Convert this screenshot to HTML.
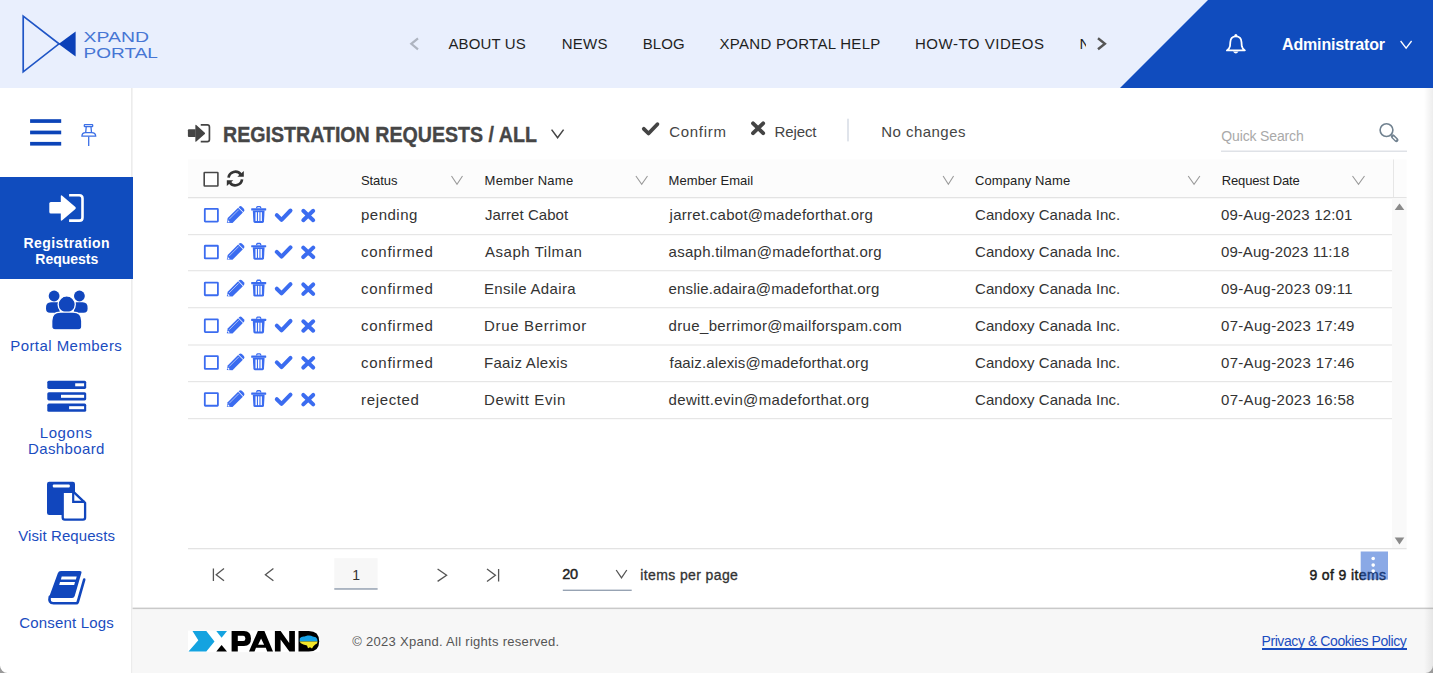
<!DOCTYPE html>
<html><head><meta charset="utf-8"><title>Registration Requests</title>
<style>
html,body{margin:0;padding:0;}
body{width:1433px;height:673px;position:relative;overflow:hidden;background:#fff;font-family:"Liberation Sans",sans-serif;}
.hdr{position:absolute;left:0;top:0;width:1433px;height:88px;background:#e9effd;}
svg.ov{position:absolute;left:0;top:0;}
.t{position:absolute;white-space:nowrap;font-family:"Liberation Sans",sans-serif;}
</style></head><body>
<div class="hdr"></div>
<svg class="ov" width="1433" height="673" viewBox="0 0 1433 673">
<polygon points="1208,0 1433,0 1433,88 1120,88" fill="#104cbe"/>
<path d="M23.2,16.2 L59,43.8 L23.2,71.8 Z" fill="none" stroke="#1f55c6" stroke-width="1.7" stroke-linejoin="miter"/>
<polygon points="58.6,43.9 75.6,31.4 75.6,56.6" fill="#0b40b8"/>
<text x="83.6" y="41.9" font-family="Liberation Sans" font-size="14.6" fill="#4676d4" textLength="65.4" lengthAdjust="spacingAndGlyphs">XPAND</text>
<text x="83.6" y="58.1" font-family="Liberation Sans" font-size="14.6" fill="#4676d4" textLength="74.3" lengthAdjust="spacingAndGlyphs">PORTAL</text>
<polyline points="418,38.3 411.3,43.8 418,49.3" fill="none" stroke="#aeb4c0" stroke-width="2.2"/>
<polyline points="1098,38.3 1104.9,43.8 1098,49.3" fill="none" stroke="#555" stroke-width="2.4"/>
<g fill="none" stroke="#fff" stroke-width="1.8" stroke-linejoin="round"><path d="M1235.9,36.4 Q1241.3,36.4 1241.5,42.2 L1241.8,46.2 Q1242.3,48.8 1244.9,50.4 L1226.9,50.4 Q1229.5,48.8 1230,46.2 L1230.3,42.2 Q1230.5,36.4 1235.9,36.4 Z"/></g>
<circle cx="1235.9" cy="35.4" r="1.5" fill="#fff"/><path d="M1233,51.6 Q1235.8,55.5 1238.6,51.6 Z" fill="#fff"/>
<polyline points="1400.6,41 1406.1,48.1 1411.6,41" fill="none" stroke="#fff" stroke-width="1.3"/>
<rect x="131" y="88" width="1.6" height="585" fill="#ececec"/>
<rect x="30.1" y="119.2" width="31.1" height="3.7" fill="#0c44b8"/>
<rect x="30.1" y="130.6" width="31.1" height="3.7" fill="#0c44b8"/>
<rect x="30.1" y="141.9" width="31.1" height="3.7" fill="#0c44b8"/>
<g fill="none" stroke="#3b6fe6" stroke-width="1.3"><rect x="84.3" y="124.6" width="8.4" height="2" rx="0.6"/><path d="M86.2,127 L85.7,132.6 M91,127 L91.5,132.6"/><path d="M81.9,136.2 L95.7,136.2 Q95.7,132.6 91.5,132.6 L85.7,132.6 Q81.9,132.6 81.9,136.2 Z"/><path d="M88.7,136.5 L88.7,146"/></g>
<rect x="0" y="177" width="133" height="102" fill="#104cbe"/>
<g transform="translate(49,193.6) scale(1.0,1.0)">
<path fill="#fff" d="M1.8,8.3 L12.2,8.3 L12.2,19.8 L1.8,19.8 Q0.3,19.8 0.3,18.3 L0.3,9.8 Q0.3,8.3 1.8,8.3 Z"/>
<path fill="#fff" d="M11.8,2.6 Q11.8,0.9 13.2,2.1 L26.4,13.4 Q27.3,14.4 26.4,15.4 L13.2,26.7 Q11.8,27.9 11.8,26.2 Z"/>
<path fill="none" stroke="#fff" stroke-width="2.6" d="M20.1,1.7 L30.3,1.7 Q33.5,1.7 33.5,4.9 L33.5,23.8 Q33.5,27 30.3,27 L20.1,27"/>
</g>
<g fill="#1146bd">
<circle cx="54.1" cy="296" r="5.4"/><circle cx="79.4" cy="296" r="5.4"/>
<path d="M46,308.5 Q45.6,302.2 51,302.2 L58,302.2 L60,312.8 L50,312.8 Q46,312.8 46,308.5 Z"/>
<path d="M87.6,308.5 Q88,302.2 82.6,302.2 L75.6,302.2 L73.6,312.8 L83.6,312.8 Q87.6,312.8 87.6,308.5 Z"/>
</g><g fill="#1146bd" stroke="#fff" stroke-width="1.3">
<circle cx="66.7" cy="304.5" r="8.6"/>
<path d="M51.7,321 Q51.7,312.1 60.5,312.1 L73,312.1 Q81.8,312.1 81.8,321 L81.8,326.4 Q81.8,329.8 78.4,329.8 L55.1,329.8 Q51.7,329.8 51.7,326.4 Z"/>
</g>
<rect x="47.3" y="380.7" width="38.9" height="8.2" rx="1.6" fill="#1146bd"/>
<rect x="75.2" y="383.3" width="8.899999999999991" height="3" fill="#fff"/>
<rect x="47.3" y="392.2" width="38.9" height="8.2" rx="1.6" fill="#1146bd"/>
<rect x="61" y="394.8" width="23.099999999999994" height="3" fill="#fff"/>
<rect x="47.3" y="403.6" width="38.9" height="8.2" rx="1.6" fill="#1146bd"/>
<rect x="69.1" y="406.20000000000005" width="15.0" height="3" fill="#fff"/>
<rect x="47" y="481.8" width="28" height="33.2" rx="2.2" fill="#1146bd"/>
<rect x="52.8" y="484.4" width="17" height="3" rx="1" fill="#fff"/>
<path d="M62.7,491.8 L73.5,491.8 L85.1,502.8 L85.1,517.6 Q85.1,519.7 83,519.7 L64.8,519.7 Q62.7,519.7 62.7,517.6 Z" fill="#fff" stroke="#1146bd" stroke-width="2.3" stroke-linejoin="round"/>
<path d="M73.2,492 L73.2,501.8 L84.8,501.8" fill="none" stroke="#1146bd" stroke-width="2.2"/>
<path d="M61,570.9 L79.8,570.9 Q82,570.9 81.4,573.1 L74.7,596 Q74.1,598 72.1,598 L50.6,598 Q48.9,598 49.4,596.3 L57.8,573.3 Q58.6,570.9 61,570.9 Z" fill="#1146bd"/>
<path d="M49.8,596.8 Q48.2,603.3 53.6,603.3 L76.2,603.3 Q77.4,603.3 77.8,602 L84.2,579.6" fill="none" stroke="#1146bd" stroke-width="2.6" stroke-linecap="round" stroke-linejoin="round"/>
<path d="M61.7,576.5 L76.7,576.5 L75.9,579.4 L60.9,579.4 Z M60,582 L75,582 L74.2,585 L59.2,585 Z" fill="#fff"/>
<g transform="translate(187.7,123.7) scale(0.6485714285714286,0.6678571428571428)">
<path fill="#444" d="M1.8,8.3 L12.2,8.3 L12.2,19.8 L1.8,19.8 Q0.3,19.8 0.3,18.3 L0.3,9.8 Q0.3,8.3 1.8,8.3 Z"/>
<path fill="#444" d="M11.8,2.6 Q11.8,0.9 13.2,2.1 L26.4,13.4 Q27.3,14.4 26.4,15.4 L13.2,26.7 Q11.8,27.9 11.8,26.2 Z"/>
<path fill="none" stroke="#444" stroke-width="2.6" d="M20.1,1.7 L30.3,1.7 Q33.5,1.7 33.5,4.9 L33.5,23.8 Q33.5,27 30.3,27 L20.1,27"/>
</g>
<polyline points="551.6,129.6 557.6,137.8 563.6,129.6" fill="none" stroke="#444" stroke-width="1.5"/>
<polyline points="643.80,128.79 648.51,133.50 657.40,124.20" fill="none" stroke="#444" stroke-width="3.8" stroke-linecap="round" stroke-linejoin="round"/>
<path d="M753.0500000000001,123.35000000000001 L763.15,133.15 M763.15,123.35000000000001 L753.0500000000001,133.15" stroke="#444" stroke-width="3.9" stroke-linecap="round"/>
<rect x="847.2" y="118.7" width="1.6" height="22.7" fill="#d9dee7"/>
<g fill="none" stroke="#718290" stroke-linecap="round"><circle cx="1386.5" cy="130.1" r="6.4" stroke-width="1.6"/><path d="M1392.9,136.6 L1396.4,140.1" stroke-width="4.2"/><path d="M1393.5,137.2 L1395.8,139.5" stroke="#fff" stroke-width="1.3"/></g>
<rect x="1221" y="150.5" width="186" height="1.5" fill="#dfe2e7"/>
<rect x="188" y="159.5" width="1218.6" height="37.5" fill="#fcfcfc"/>
<rect x="1393" y="159.5" width="1" height="37.5" fill="#e6e6e6"/>
<rect x="188" y="197" width="1218.6" height="1.3" fill="#e3e3e3"/>
<polyline points="451.5,176 457.0,184.3 462.5,176" fill="none" stroke="#9a9a9a" stroke-width="1.1"/>
<polyline points="635.9,176 641.7,184.3 647.5,176" fill="none" stroke="#9a9a9a" stroke-width="1.1"/>
<polyline points="943.1,176 948.35,184.3 953.6,176" fill="none" stroke="#9a9a9a" stroke-width="1.1"/>
<polyline points="1188.2,176 1194.0500000000002,184.3 1199.9,176" fill="none" stroke="#9a9a9a" stroke-width="1.1"/>
<polyline points="1352.5,176 1358.5,184.3 1364.5,176" fill="none" stroke="#9a9a9a" stroke-width="1.1"/>
<rect x="204.20000000000002" y="172.5" width="13.699999999999983" height="13.500000000000023" fill="#fff" stroke="#474747" stroke-width="1.6" rx="0.5"/>
<g transform="translate(235.3,178.5)"><path d="M-6.75,-0.9 A6.8,6.8 0 0 1 5.4,-4.1" fill="none" stroke="#333" stroke-width="2.7"/><polygon points="8.5,-7.6 8.5,-1.8 2,-1.8" fill="#333"/><path d="M6.75,0.9 A6.8,6.8 0 0 1 -5.4,4.1" fill="none" stroke="#333" stroke-width="2.7"/><polygon points="-8.5,7.6 -8.5,1.8 -2,1.8" fill="#333"/></g>
<rect x="1392" y="198.3" width="14.6" height="349.7" fill="#f9f9f9"/>
<polygon points="1394.7,210 1399.5,203.4 1404.3,210" fill="#8a8a8a"/>
<polygon points="1394.7,537.6 1404.3,537.6 1399.5,544.4" fill="#8a8a8a"/>
<rect x="188" y="234" width="1204" height="1.2" fill="#e6e6e6"/>
<rect x="188" y="270.1" width="1204" height="1.2" fill="#e6e6e6"/>
<rect x="188" y="307.1" width="1204" height="1.2" fill="#e6e6e6"/>
<rect x="188" y="344.4" width="1204" height="1.2" fill="#e6e6e6"/>
<rect x="188" y="381" width="1204" height="1.2" fill="#e6e6e6"/>
<rect x="188" y="418" width="1204" height="1.2" fill="#e6e6e6"/>
<rect x="204.8" y="208.9" width="13.100000000000005" height="12.7" fill="#fff" stroke="#3b6cf0" stroke-width="1.8" rx="0.5"/>
<g transform="translate(226.5,206.9)" fill="#3b6cf0">
<path d="M0.3,15.8 L1.2,11.2 L11.6,0.8 L16.4,5.6 L6,16 Z"/>
<path d="M12.6,-0.2 Q14,-1.4 15.4,-0.2 L17.4,1.8 Q18.6,3.2 17.4,4.6 L16.9,5.1 L12.1,0.3 Z"/>
<path d="M2.6,12.4 L12.2,2.8" stroke="#fff" stroke-width="0.7" opacity="0.8"/>
<path d="M1.6,13.4 L3.1,14.9 L2.3,15.7 L0.8,14.2 Z" fill="#fff"/>
</g>
<g transform="translate(251.2,205.9)" fill="#3b6cf0">
<path d="M4.6,2.4 L5.3,0.6 Q5.6,0 6.3,0 L8.7,0 Q9.4,0 9.7,0.6 L10.4,2.4 L9,2.4 L8.6,1.4 L6.4,1.4 L6,2.4 Z"/>
<rect x="0" y="2.4" width="15" height="2.2" rx="0.5"/>
<path d="M1.6,4.6 L13.4,4.6 L12.8,15.6 Q12.7,17 11.3,17 L3.7,17 Q2.3,17 2.2,15.6 Z"/>
<rect x="4.3" y="6.3" width="1.4" height="8.8" fill="#fff"/>
<rect x="6.8" y="6.3" width="1.4" height="8.8" fill="#fff"/>
<rect x="9.3" y="6.3" width="1.4" height="8.8" fill="#fff"/>
</g>
<polyline points="276.80,215.07 281.53,219.80 290.50,210.50" fill="none" stroke="#3b6cf0" stroke-width="4.0" stroke-linecap="round" stroke-linejoin="round"/>
<path d="M303.3,210.8 L313.2,220.2 M313.2,210.8 L303.3,220.2" stroke="#3b6cf0" stroke-width="4.0" stroke-linecap="round"/>
<rect x="204.8" y="245.73" width="13.100000000000005" height="12.7" fill="#fff" stroke="#3b6cf0" stroke-width="1.8" rx="0.5"/>
<g transform="translate(226.5,243.73000000000002)" fill="#3b6cf0">
<path d="M0.3,15.8 L1.2,11.2 L11.6,0.8 L16.4,5.6 L6,16 Z"/>
<path d="M12.6,-0.2 Q14,-1.4 15.4,-0.2 L17.4,1.8 Q18.6,3.2 17.4,4.6 L16.9,5.1 L12.1,0.3 Z"/>
<path d="M2.6,12.4 L12.2,2.8" stroke="#fff" stroke-width="0.7" opacity="0.8"/>
<path d="M1.6,13.4 L3.1,14.9 L2.3,15.7 L0.8,14.2 Z" fill="#fff"/>
</g>
<g transform="translate(251.2,242.73000000000002)" fill="#3b6cf0">
<path d="M4.6,2.4 L5.3,0.6 Q5.6,0 6.3,0 L8.7,0 Q9.4,0 9.7,0.6 L10.4,2.4 L9,2.4 L8.6,1.4 L6.4,1.4 L6,2.4 Z"/>
<rect x="0" y="2.4" width="15" height="2.2" rx="0.5"/>
<path d="M1.6,4.6 L13.4,4.6 L12.8,15.6 Q12.7,17 11.3,17 L3.7,17 Q2.3,17 2.2,15.6 Z"/>
<rect x="4.3" y="6.3" width="1.4" height="8.8" fill="#fff"/>
<rect x="6.8" y="6.3" width="1.4" height="8.8" fill="#fff"/>
<rect x="9.3" y="6.3" width="1.4" height="8.8" fill="#fff"/>
</g>
<polyline points="276.80,251.90 281.53,256.63 290.50,247.33" fill="none" stroke="#3b6cf0" stroke-width="4.0" stroke-linecap="round" stroke-linejoin="round"/>
<path d="M303.3,247.63 L313.2,257.03 M313.2,247.63 L303.3,257.03" stroke="#3b6cf0" stroke-width="4.0" stroke-linecap="round"/>
<rect x="204.8" y="282.55999999999995" width="13.100000000000005" height="12.7" fill="#fff" stroke="#3b6cf0" stroke-width="1.8" rx="0.5"/>
<g transform="translate(226.5,280.56)" fill="#3b6cf0">
<path d="M0.3,15.8 L1.2,11.2 L11.6,0.8 L16.4,5.6 L6,16 Z"/>
<path d="M12.6,-0.2 Q14,-1.4 15.4,-0.2 L17.4,1.8 Q18.6,3.2 17.4,4.6 L16.9,5.1 L12.1,0.3 Z"/>
<path d="M2.6,12.4 L12.2,2.8" stroke="#fff" stroke-width="0.7" opacity="0.8"/>
<path d="M1.6,13.4 L3.1,14.9 L2.3,15.7 L0.8,14.2 Z" fill="#fff"/>
</g>
<g transform="translate(251.2,279.56)" fill="#3b6cf0">
<path d="M4.6,2.4 L5.3,0.6 Q5.6,0 6.3,0 L8.7,0 Q9.4,0 9.7,0.6 L10.4,2.4 L9,2.4 L8.6,1.4 L6.4,1.4 L6,2.4 Z"/>
<rect x="0" y="2.4" width="15" height="2.2" rx="0.5"/>
<path d="M1.6,4.6 L13.4,4.6 L12.8,15.6 Q12.7,17 11.3,17 L3.7,17 Q2.3,17 2.2,15.6 Z"/>
<rect x="4.3" y="6.3" width="1.4" height="8.8" fill="#fff"/>
<rect x="6.8" y="6.3" width="1.4" height="8.8" fill="#fff"/>
<rect x="9.3" y="6.3" width="1.4" height="8.8" fill="#fff"/>
</g>
<polyline points="276.80,288.73 281.53,293.46 290.50,284.16" fill="none" stroke="#3b6cf0" stroke-width="4.0" stroke-linecap="round" stroke-linejoin="round"/>
<path d="M303.3,284.46000000000004 L313.2,293.86 M313.2,284.46000000000004 L303.3,293.86" stroke="#3b6cf0" stroke-width="4.0" stroke-linecap="round"/>
<rect x="204.8" y="319.39" width="13.100000000000005" height="12.7" fill="#fff" stroke="#3b6cf0" stroke-width="1.8" rx="0.5"/>
<g transform="translate(226.5,317.39)" fill="#3b6cf0">
<path d="M0.3,15.8 L1.2,11.2 L11.6,0.8 L16.4,5.6 L6,16 Z"/>
<path d="M12.6,-0.2 Q14,-1.4 15.4,-0.2 L17.4,1.8 Q18.6,3.2 17.4,4.6 L16.9,5.1 L12.1,0.3 Z"/>
<path d="M2.6,12.4 L12.2,2.8" stroke="#fff" stroke-width="0.7" opacity="0.8"/>
<path d="M1.6,13.4 L3.1,14.9 L2.3,15.7 L0.8,14.2 Z" fill="#fff"/>
</g>
<g transform="translate(251.2,316.39)" fill="#3b6cf0">
<path d="M4.6,2.4 L5.3,0.6 Q5.6,0 6.3,0 L8.7,0 Q9.4,0 9.7,0.6 L10.4,2.4 L9,2.4 L8.6,1.4 L6.4,1.4 L6,2.4 Z"/>
<rect x="0" y="2.4" width="15" height="2.2" rx="0.5"/>
<path d="M1.6,4.6 L13.4,4.6 L12.8,15.6 Q12.7,17 11.3,17 L3.7,17 Q2.3,17 2.2,15.6 Z"/>
<rect x="4.3" y="6.3" width="1.4" height="8.8" fill="#fff"/>
<rect x="6.8" y="6.3" width="1.4" height="8.8" fill="#fff"/>
<rect x="9.3" y="6.3" width="1.4" height="8.8" fill="#fff"/>
</g>
<polyline points="276.80,325.56 281.53,330.29 290.50,320.99" fill="none" stroke="#3b6cf0" stroke-width="4.0" stroke-linecap="round" stroke-linejoin="round"/>
<path d="M303.3,321.29 L313.2,330.69 M313.2,321.29 L303.3,330.69" stroke="#3b6cf0" stroke-width="4.0" stroke-linecap="round"/>
<rect x="204.8" y="356.21999999999997" width="13.100000000000005" height="12.7" fill="#fff" stroke="#3b6cf0" stroke-width="1.8" rx="0.5"/>
<g transform="translate(226.5,354.22)" fill="#3b6cf0">
<path d="M0.3,15.8 L1.2,11.2 L11.6,0.8 L16.4,5.6 L6,16 Z"/>
<path d="M12.6,-0.2 Q14,-1.4 15.4,-0.2 L17.4,1.8 Q18.6,3.2 17.4,4.6 L16.9,5.1 L12.1,0.3 Z"/>
<path d="M2.6,12.4 L12.2,2.8" stroke="#fff" stroke-width="0.7" opacity="0.8"/>
<path d="M1.6,13.4 L3.1,14.9 L2.3,15.7 L0.8,14.2 Z" fill="#fff"/>
</g>
<g transform="translate(251.2,353.22)" fill="#3b6cf0">
<path d="M4.6,2.4 L5.3,0.6 Q5.6,0 6.3,0 L8.7,0 Q9.4,0 9.7,0.6 L10.4,2.4 L9,2.4 L8.6,1.4 L6.4,1.4 L6,2.4 Z"/>
<rect x="0" y="2.4" width="15" height="2.2" rx="0.5"/>
<path d="M1.6,4.6 L13.4,4.6 L12.8,15.6 Q12.7,17 11.3,17 L3.7,17 Q2.3,17 2.2,15.6 Z"/>
<rect x="4.3" y="6.3" width="1.4" height="8.8" fill="#fff"/>
<rect x="6.8" y="6.3" width="1.4" height="8.8" fill="#fff"/>
<rect x="9.3" y="6.3" width="1.4" height="8.8" fill="#fff"/>
</g>
<polyline points="276.80,362.39 281.53,367.12 290.50,357.82" fill="none" stroke="#3b6cf0" stroke-width="4.0" stroke-linecap="round" stroke-linejoin="round"/>
<path d="M303.3,358.12 L313.2,367.52 M313.2,358.12 L303.3,367.52" stroke="#3b6cf0" stroke-width="4.0" stroke-linecap="round"/>
<rect x="204.8" y="393.04999999999995" width="13.100000000000005" height="12.7" fill="#fff" stroke="#3b6cf0" stroke-width="1.8" rx="0.5"/>
<g transform="translate(226.5,391.04999999999995)" fill="#3b6cf0">
<path d="M0.3,15.8 L1.2,11.2 L11.6,0.8 L16.4,5.6 L6,16 Z"/>
<path d="M12.6,-0.2 Q14,-1.4 15.4,-0.2 L17.4,1.8 Q18.6,3.2 17.4,4.6 L16.9,5.1 L12.1,0.3 Z"/>
<path d="M2.6,12.4 L12.2,2.8" stroke="#fff" stroke-width="0.7" opacity="0.8"/>
<path d="M1.6,13.4 L3.1,14.9 L2.3,15.7 L0.8,14.2 Z" fill="#fff"/>
</g>
<g transform="translate(251.2,390.04999999999995)" fill="#3b6cf0">
<path d="M4.6,2.4 L5.3,0.6 Q5.6,0 6.3,0 L8.7,0 Q9.4,0 9.7,0.6 L10.4,2.4 L9,2.4 L8.6,1.4 L6.4,1.4 L6,2.4 Z"/>
<rect x="0" y="2.4" width="15" height="2.2" rx="0.5"/>
<path d="M1.6,4.6 L13.4,4.6 L12.8,15.6 Q12.7,17 11.3,17 L3.7,17 Q2.3,17 2.2,15.6 Z"/>
<rect x="4.3" y="6.3" width="1.4" height="8.8" fill="#fff"/>
<rect x="6.8" y="6.3" width="1.4" height="8.8" fill="#fff"/>
<rect x="9.3" y="6.3" width="1.4" height="8.8" fill="#fff"/>
</g>
<polyline points="276.80,399.22 281.53,403.95 290.50,394.65" fill="none" stroke="#3b6cf0" stroke-width="4.0" stroke-linecap="round" stroke-linejoin="round"/>
<path d="M303.3,394.95 L313.2,404.34999999999997 M313.2,394.95 L303.3,404.34999999999997" stroke="#3b6cf0" stroke-width="4.0" stroke-linecap="round"/>
<rect x="188" y="548" width="1218.6" height="1.3" fill="#e3e3e3"/>
<g fill="none" stroke="#555" stroke-width="1.3"><path d="M213.4,568.5 L213.4,580.9 M224,568.6 L216.2,574.7 L224,580.8"/><path d="M273.4,568.6 L265.4,574.7 L273.4,580.8"/><path d="M437.6,569 L446.6,575.2 L437.6,581.4"/><path d="M487,569 L495.4,575.2 L487,581.4 M498.6,569 L498.6,581.4"/><path d="M616.2,570 L621.5,577.8 L626.8,570"/></g>
<rect x="334.3" y="558.2" width="43.3" height="31.5" fill="#f7f7f7"/><rect x="334.3" y="588.2" width="43.3" height="1.5" fill="#97a3b3"/>
<rect x="562.8" y="589.6" width="68.9" height="1.4" fill="#97a3b3"/>
<rect x="132.6" y="608.6" width="1300.4" height="64.4" fill="#f7f7f7"/>
<rect x="132.6" y="607.6" width="1300.4" height="1.5" fill="#c9c9c9"/>
<rect x="187.9" y="630.6" width="131.8" height="21.6" fill="#fff"/>
<polygon points="192.5,630.9 206.3,630.9 214.5,641.4 206.3,651.6 188.5,651.6 198.3,640.2" fill="#14a3e0"/>
<polygon points="216.3,630.9 227,630.9 221.6,637.8" fill="#14a3e0"/>
<polygon points="216.3,651.6 227,651.6 221.6,644.9" fill="#000"/>
<path fill-rule="evenodd" fill="#000" d="M231.6,630.9 L244,630.9 Q251,630.9 251,638.45 Q251,646 244,646 L237.8,646 L237.8,651.6 L231.6,651.6 Z M237.8,635.8 L243.3,635.8 Q245.4,635.8 245.4,638.45 Q245.4,641.1 243.3,641.1 L237.8,641.1 Z"/>
<path fill-rule="evenodd" fill="#000" d="M257.9,630.9 L264.4,630.9 L273,651.6 L267.2,651.6 L265.8,647.7 L256,647.7 L254.5,651.6 L249,651.6 Z M261.1,638.6 L264.1,644.7 L258.1,644.7 Z"/>
<path fill="#000" d="M274.9,630.9 L280.6,630.9 L289.2,643 L289.2,630.9 L294.9,630.9 L294.9,651.6 L289.4,651.6 L280.6,639.5 L280.6,651.6 L274.9,651.6 Z"/>
<path fill="#000" d="M298.5,630.9 L308.8,630.9 Q319.2,630.9 319.2,641.25 Q319.2,651.6 308.8,651.6 L298.5,651.6 Z"/>
<path fill="#17a2e6" d="M299.8,638.2 Q301.5,636.2 304.5,636.6 L307.5,635.6 Q310.5,635 312.8,636.4 L315.8,637.2 Q317.8,638.8 317.6,641.5 L299.6,641.5 Z"/>
<path fill="#f5e72a" d="M299.6,641.5 L317.6,641.5 Q317.6,643.8 315.2,644.6 L313.4,646.2 L312,648.6 L310,647.2 L308,648.2 L307,645.4 L303.4,644.6 Q300.2,643.4 299.6,641.5 Z"/>
<defs><linearGradient id="sh" x1="0" x2="1"><stop offset="0" stop-color="#000" stop-opacity="0"/><stop offset="1" stop-color="#000" stop-opacity="0.07"/></linearGradient></defs>
<rect x="1424" y="88" width="9" height="585" fill="url(#sh)"/>
<path d="M0,665.5 A7.5,7.5 0 0 0 7.5,673 L0,673 Z" fill="#9a9a9a"/>
<path d="M1433,665.5 A7.5,7.5 0 0 1 1425.5,673 L1433,673 Z" fill="#9a9a9a"/>
</svg>
<div class="t" style="left:448.40px;top:35.90px;font-size:15px;line-height:15px;font-weight:400;letter-spacing:0.143px;color:#1f1f1f;">ABOUT US</div>
<div class="t" style="left:561.70px;top:35.90px;font-size:15px;line-height:15px;font-weight:400;letter-spacing:0.267px;color:#1f1f1f;">NEWS</div>
<div class="t" style="left:642.80px;top:35.90px;font-size:15px;line-height:15px;font-weight:400;letter-spacing:0.067px;color:#1f1f1f;">BLOG</div>
<div class="t" style="left:719.50px;top:35.90px;font-size:15px;line-height:15px;font-weight:400;letter-spacing:0.288px;color:#1f1f1f;">XPAND PORTAL HELP</div>
<div class="t" style="left:915.00px;top:35.90px;font-size:15px;line-height:15px;font-weight:400;letter-spacing:0.517px;color:#1f1f1f;">HOW-TO VIDEOS</div>
<div class="t" style="left:1282.00px;top:36.65px;font-size:16px;line-height:16px;font-weight:700;letter-spacing:-0.150px;color:#ffffff;">Administrator</div>
<div class="t" style="left:23.60px;top:236.15px;font-size:14px;line-height:14px;font-weight:700;letter-spacing:0.382px;color:#ffffff;">Registration</div>
<div class="t" style="left:35.30px;top:251.75px;font-size:14px;line-height:14px;font-weight:700;letter-spacing:0.000px;color:#ffffff;">Requests</div>
<div class="t" style="left:10.20px;top:337.50px;font-size:15px;line-height:15px;font-weight:400;letter-spacing:0.446px;color:#1a4cc0;">Portal Members</div>
<div class="t" style="left:39.70px;top:425.30px;font-size:15px;line-height:15px;font-weight:400;letter-spacing:0.600px;color:#1a4cc0;">Logons</div>
<div class="t" style="left:28.00px;top:440.80px;font-size:15px;line-height:15px;font-weight:400;letter-spacing:0.375px;color:#1a4cc0;">Dashboard</div>
<div class="t" style="left:18.30px;top:528.20px;font-size:15px;line-height:15px;font-weight:400;letter-spacing:0.077px;color:#1a4cc0;">Visit Requests</div>
<div class="t" style="left:19.20px;top:615.30px;font-size:15px;line-height:15px;font-weight:400;letter-spacing:0.182px;color:#1a4cc0;">Consent Logs</div>
<div class="t" style="left:669.20px;top:123.80px;font-size:15px;line-height:15px;font-weight:400;letter-spacing:0.700px;color:#444444;">Confirm</div>
<div class="t" style="left:774.60px;top:123.80px;font-size:15px;line-height:15px;font-weight:400;letter-spacing:-0.120px;color:#444444;">Reject</div>
<div class="t" style="left:881.20px;top:123.80px;font-size:15px;line-height:15px;font-weight:400;letter-spacing:0.467px;color:#444444;">No changes</div>
<div class="t" style="left:1221.30px;top:128.65px;font-size:14px;line-height:14px;font-weight:400;letter-spacing:-0.145px;color:#a9a9a9;">Quick Search</div>
<div class="t" style="left:361.00px;top:174.39px;font-size:13px;line-height:13px;font-weight:400;letter-spacing:-0.080px;color:#222222;">Status</div>
<div class="t" style="left:484.60px;top:174.19px;font-size:13px;line-height:13px;font-weight:400;letter-spacing:0.260px;color:#222222;">Member Name</div>
<div class="t" style="left:668.60px;top:174.19px;font-size:13px;line-height:13px;font-weight:400;letter-spacing:0.073px;color:#222222;">Member Email</div>
<div class="t" style="left:975.00px;top:174.19px;font-size:13px;line-height:13px;font-weight:400;letter-spacing:0.109px;color:#222222;">Company Name</div>
<div class="t" style="left:1221.70px;top:174.19px;font-size:13px;line-height:13px;font-weight:400;letter-spacing:-0.127px;color:#222222;">Request Date</div>
<div class="t" style="left:352.30px;top:567.75px;font-size:14px;line-height:14px;font-weight:400;letter-spacing:0.000px;color:#333333;">1</div>
<div class="t" style="left:562.20px;top:567.12px;font-size:14.5px;line-height:14.5px;font-weight:400;letter-spacing:-0.200px;color:#222222;-webkit-text-stroke:0.45px #222;">20</div>
<div class="t" style="left:640.30px;top:567.55px;font-size:14px;line-height:14px;font-weight:400;letter-spacing:0.385px;color:#333333;-webkit-text-stroke:0.3px #333;">items per page</div>
<div class="t" style="left:1309.40px;top:567.85px;font-size:14px;line-height:14px;font-weight:400;letter-spacing:0.382px;color:#1a1a1a;-webkit-text-stroke:0.45px #1a1a1a;">9 of 9 items</div>
<div class="t" style="left:352.30px;top:635.19px;font-size:13px;line-height:13px;font-weight:400;letter-spacing:0.285px;color:#555555;">© 2023 Xpand. All rights reserved.</div>
<div class="t" style="left:1261.50px;top:634.05px;font-size:14px;line-height:14px;font-weight:400;letter-spacing:-0.417px;color:#1a4cc0;">Privacy &amp; Cookies Policy</div>
<div class="t" style="left:361.00px;top:207.40px;font-size:15px;line-height:15px;font-weight:400;letter-spacing:0.500px;color:#333333;">pending</div>
<div class="t" style="left:485.00px;top:207.40px;font-size:15px;line-height:15px;font-weight:400;letter-spacing:0.055px;color:#333333;">Jarret Cabot</div>
<div class="t" style="left:669.60px;top:207.40px;font-size:15px;line-height:15px;font-weight:400;letter-spacing:0.267px;color:#333333;">jarret.cabot@madeforthat.org</div>
<div class="t" style="left:975.00px;top:207.40px;font-size:15px;line-height:15px;font-weight:400;letter-spacing:0.044px;color:#333333;">Candoxy Canada Inc.</div>
<div class="t" style="left:1221.00px;top:207.40px;font-size:15px;line-height:15px;font-weight:400;letter-spacing:0.188px;color:#333333;">09-Aug-2023 12:01</div>
<div class="t" style="left:361.00px;top:244.23px;font-size:15px;line-height:15px;font-weight:400;letter-spacing:0.750px;color:#333333;">confirmed</div>
<div class="t" style="left:485.00px;top:244.23px;font-size:15px;line-height:15px;font-weight:400;letter-spacing:0.545px;color:#333333;">Asaph Tilman</div>
<div class="t" style="left:668.60px;top:244.23px;font-size:15px;line-height:15px;font-weight:400;letter-spacing:0.252px;color:#333333;">asaph.tilman@madeforthat.org</div>
<div class="t" style="left:975.00px;top:244.23px;font-size:15px;line-height:15px;font-weight:400;letter-spacing:0.056px;color:#333333;">Candoxy Canada Inc.</div>
<div class="t" style="left:1221.00px;top:244.23px;font-size:15px;line-height:15px;font-weight:400;letter-spacing:0.062px;color:#333333;">09-Aug-2023 11:18</div>
<div class="t" style="left:361.00px;top:281.06px;font-size:15px;line-height:15px;font-weight:400;letter-spacing:0.750px;color:#333333;">confirmed</div>
<div class="t" style="left:484.00px;top:281.06px;font-size:15px;line-height:15px;font-weight:400;letter-spacing:0.333px;color:#333333;">Ensile Adaira</div>
<div class="t" style="left:668.60px;top:281.06px;font-size:15px;line-height:15px;font-weight:400;letter-spacing:0.164px;color:#333333;">enslie.adaira@madeforthat.org</div>
<div class="t" style="left:975.00px;top:281.06px;font-size:15px;line-height:15px;font-weight:400;letter-spacing:0.056px;color:#333333;">Candoxy Canada Inc.</div>
<div class="t" style="left:1221.00px;top:281.06px;font-size:15px;line-height:15px;font-weight:400;letter-spacing:0.263px;color:#333333;">09-Aug-2023 09:11</div>
<div class="t" style="left:361.00px;top:317.89px;font-size:15px;line-height:15px;font-weight:400;letter-spacing:0.750px;color:#333333;">confirmed</div>
<div class="t" style="left:484.00px;top:317.89px;font-size:15px;line-height:15px;font-weight:400;letter-spacing:0.667px;color:#333333;">Drue Berrimor</div>
<div class="t" style="left:668.60px;top:317.89px;font-size:15px;line-height:15px;font-weight:400;letter-spacing:0.343px;color:#333333;">drue_berrimor@mailforspam.com</div>
<div class="t" style="left:975.00px;top:317.89px;font-size:15px;line-height:15px;font-weight:400;letter-spacing:0.056px;color:#333333;">Candoxy Canada Inc.</div>
<div class="t" style="left:1221.00px;top:317.89px;font-size:15px;line-height:15px;font-weight:400;letter-spacing:0.312px;color:#333333;">07-Aug-2023 17:49</div>
<div class="t" style="left:361.00px;top:354.72px;font-size:15px;line-height:15px;font-weight:400;letter-spacing:0.750px;color:#333333;">confirmed</div>
<div class="t" style="left:484.00px;top:354.72px;font-size:15px;line-height:15px;font-weight:400;letter-spacing:0.309px;color:#333333;">Faaiz Alexis</div>
<div class="t" style="left:669.60px;top:354.72px;font-size:15px;line-height:15px;font-weight:400;letter-spacing:0.133px;color:#333333;">faaiz.alexis@madeforthat.org</div>
<div class="t" style="left:975.00px;top:354.72px;font-size:15px;line-height:15px;font-weight:400;letter-spacing:0.056px;color:#333333;">Candoxy Canada Inc.</div>
<div class="t" style="left:1221.00px;top:354.72px;font-size:15px;line-height:15px;font-weight:400;letter-spacing:0.312px;color:#333333;">07-Aug-2023 17:46</div>
<div class="t" style="left:361.00px;top:391.55px;font-size:15px;line-height:15px;font-weight:400;letter-spacing:0.657px;color:#333333;">rejected</div>
<div class="t" style="left:484.00px;top:391.55px;font-size:15px;line-height:15px;font-weight:400;letter-spacing:0.640px;color:#333333;">Dewitt Evin</div>
<div class="t" style="left:668.60px;top:391.55px;font-size:15px;line-height:15px;font-weight:400;letter-spacing:0.331px;color:#333333;">dewitt.evin@madeforthat.org</div>
<div class="t" style="left:975.00px;top:391.55px;font-size:15px;line-height:15px;font-weight:400;letter-spacing:0.056px;color:#333333;">Candoxy Canada Inc.</div>
<div class="t" style="left:1221.00px;top:391.55px;font-size:15px;line-height:15px;font-weight:400;letter-spacing:0.312px;color:#333333;">07-Aug-2023 16:58</div>
<svg style="position:absolute;left:1360px;top:551px" width="30" height="30" viewBox="1360 551 30 30"><rect x="1360.7" y="551.5" width="27.3" height="28.1" fill="#1f5bd0" fill-opacity="0.52"/><circle cx="1373.2" cy="558.5" r="1.8" fill="#fff"/><circle cx="1373.2" cy="565.1" r="1.8" fill="#fff"/><circle cx="1373.2" cy="571.1" r="1.8" fill="#fff"/></svg>
<div style="position:absolute;left:1262px;top:648.4px;width:145px;height:1.5px;background:#1a4cc0"></div>
<div class="t" style="left:222.8px;top:124.0px;font-size:22.5px;line-height:22.5px;font-weight:700;color:#464646;-webkit-text-stroke:0.35px #464646;transform:scaleX(0.872);transform-origin:0 0">REGISTRATION REQUESTS / ALL</div>
<div style="position:absolute;left:1079.5px;top:35.9px;width:6.5px;height:16px;overflow:hidden"><div class="t" style="left:0;top:0;font-size:15px;line-height:15px;color:#1f1f1f">N</div></div>
</body></html>
